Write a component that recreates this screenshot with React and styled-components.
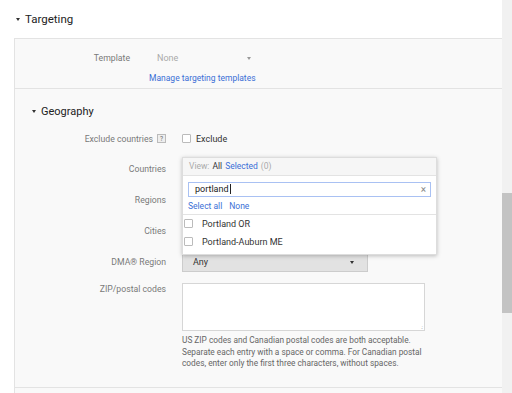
import React from "react"
import styled, { createGlobalStyle } from "styled-components"

const GlobalStyle = createGlobalStyle`
  * {
    margin: 0;
    padding: 0;
    box-sizing: border-box;
  }
  body {
    font-family: Roboto, "Liberation Sans", Arial, sans-serif;
    background: #fff;
    color: #333;
    overflow: hidden;
  }
`

const Page = styled.div`
  display: flex;
  width: 512px;
  height: 393px;
  overflow: hidden;
`

const Main = styled.div`
  flex: 1;
  padding-left: 14px;
  display: flex;
  flex-direction: column;
`

const Scrollbar = styled.div`
  width: 10px;
  background: #f1f1f1;
  display: flex;
  flex-direction: column;
  padding-top: 193px;
`

const Thumb = styled.div`
  height: 120px;
  background: #c3c3c3;
`

const Caret = styled.span`
  display: inline-block;
  width: 0;
  height: 0;
  border-left: 2.5px solid transparent;
  border-right: 2.5px solid transparent;
  border-top: 3px solid ${p => p.color || "#333"};
  margin-right: ${p => p.gap || 5}px;
`

const Heading = styled.h2`
  height: 38px;
  display: flex;
  align-items: center;
  padding-left: 2px;
  font-size: 11.5px;
  font-weight: 400;
  color: #222;
`

const Panel = styled.div`
  flex: 1;
  background: #f9f9f9;
  border-left: 1px solid #e3e3e3;
  border-top: 1px solid #e3e3e3;
  display: flex;
  flex-direction: column;
`

const TemplateSection = styled.div`
  height: 50px;
  border-bottom: 1px solid #e3e3e3;
  padding-top: 14px;
  display: flex;
`

const Label = styled.div`
  width: ${p => p.w}px;
  flex-shrink: 0;
  text-align: right;
  font-size: 8.7px;
  color: #7a7a7a;
  display: flex;
  justify-content: flex-end;
  align-items: center;
  gap: 4px;
`

const TemplateControl = styled.div`
  margin-left: 19px;
  display: flex;
  flex-direction: column;
  gap: 10px;
`

const PlainSelect = styled.div`
  width: 107px;
  padding-left: 8px;
  display: flex;
  justify-content: space-between;
  align-items: center;
  font-size: 9px;
  color: #aaa;
`

const Link = styled.span`
  font-size: 8.5px;
  color: #3b6fd6;
  cursor: pointer;
`

const GeoSection = styled.div`
  flex: 1;
  border-bottom: 1px solid #e3e3e3;
  display: flex;
  flex-direction: column;
`

const SubHeading = styled.h3`
  height: 25px;
  display: flex;
  align-items: center;
  padding-left: 17px;
  font-size: 11px;
  font-weight: 400;
  color: #222;
  margin-top: 10px;
`

const Row = styled.div`
  display: flex;
  align-items: ${p => (p.top ? "flex-start" : "center")};
  height: ${p => p.h || 31}px;
`

const Control = styled.div`
  margin-left: 16px;
  position: relative;
  display: flex;
  flex-direction: column;
  align-items: flex-start;
`

const Help = styled.span`
  display: inline-flex;
  align-items: center;
  justify-content: center;
  width: 9px;
  height: 9px;
  border: 1px solid #bbb;
  background: #eee;
  font-size: 6.5px;
  color: #666;
`

const CheckLabel = styled.label`
  display: flex;
  align-items: center;
  gap: 5px;
  font-size: 9px;
  color: #333;
`

const Box = styled.span`
  width: 9px;
  height: 9px;
  border: 1px solid #bbb;
  background: #fff;
  border-radius: 1px;
`

const Popup = styled.div`
  position: absolute;
  left: 0;
  top: -12px;
  width: 255px;
  background: #fff;
  border: 1px solid #ddd;
  box-shadow: 0 1px 4px rgba(0, 0, 0, 0.25);
  z-index: 2;
`

const PopupHead = styled.div`
  height: 18px;
  display: flex;
  align-items: center;
  gap: 3px;
  padding-left: 6px;
  font-size: 8.5px;
  color: #aaa;
  background: #f6f6f6;
  border-bottom: 1px solid #e3e3e3;
`

const Strong = styled.span`
  color: ${p => (p.blue ? "#3b6fd6" : "#333")};
`

const SearchArea = styled.div`
  padding: 6px 5px 3px 5px;
  border-bottom: 1px solid #e3e3e3;
`

const Search = styled.div`
  height: 15px;
  border: 1px solid #a9c1f3;
  display: flex;
  align-items: center;
  justify-content: space-between;
  padding: 0 4px 0 6px;
  font-size: 9px;
  color: #222;
`

const Cursor = styled.span`
  border-left: 1px solid #222;
  height: 9px;
  margin-left: 1px;
`

const Clear = styled.span`
  font-size: 10px;
  color: #888;
`

const Links = styled.div`
  display: flex;
  gap: 7px;
  margin-top: 4px;
  font-size: 8.5px;
  color: #3b6fd6;
`

const Options = styled.div`
  padding: 0 0 3px;
`

const Option = styled.div`
  height: 18px;
  display: flex;
  align-items: center;
  gap: 9px;
  padding-left: 1px;
  font-size: 9px;
  color: #333;
`

const GraySelect = styled.div`
  width: 186px;
  height: 20px;
  background: #e2e2e2;
  border: 1px solid #ccc;
  display: flex;
  align-items: center;
  justify-content: space-between;
  padding: 0 8px 0 10px;
  font-size: 9px;
  color: #333;
`

const TextArea = styled.div`
  width: 243px;
  height: 48px;
  background: #fff;
  border: 1px solid #d6d6d6;
  position: relative;
`

const Grip = styled.span`
  position: absolute;
  right: 2px;
  bottom: 0px;
  font-size: 6px;
  color: #999;
  letter-spacing: -1px;
`

const Hint = styled.p`
  width: 250px;
  margin-top: 4px;
  font-size: 8.3px;
  line-height: 11.6px;
  color: #666;
`

export default function App() {
  return (
    <Page>
      <GlobalStyle />
      <Main>
        <Heading>
          <Caret />
          Targeting
        </Heading>
        <Panel>
          <TemplateSection>
            <Label w={115} style={{ alignItems: "flex-start" }}>Template</Label>
            <TemplateControl>
              <PlainSelect>
                None
                <Caret color="#999" gap={0} />
              </PlainSelect>
              <Link>Manage targeting templates</Link>
            </TemplateControl>
          </TemplateSection>
          <GeoSection>
            <SubHeading>
              <Caret />
              Geography
            </SubHeading>
            <Row h={29}>
              <Label w={151}>
                Exclude countries <Help>?</Help>
              </Label>
              <Control>
                <CheckLabel>
                  <Box />
                  Exclude
                </CheckLabel>
              </Control>
            </Row>
            <Row>
              <Label w={151}>Countries</Label>
              <Control>
                <Popup>
                  <PopupHead>
                    View: <Strong>All</Strong> <Strong blue>Selected</Strong> (0)
                  </PopupHead>
                  <SearchArea>
                    <Search>
                      <span>
                        portland<Cursor />
                      </span>
                      <Clear>×</Clear>
                    </Search>
                    <Links>
                      <span>Select all</span>
                      <span>None</span>
                    </Links>
                  </SearchArea>
                  <Options>
                    <Option>
                      <Box />
                      Portland OR
                    </Option>
                    <Option>
                      <Box />
                      Portland-Auburn ME
                    </Option>
                  </Options>
                </Popup>
              </Control>
            </Row>
            <Row>
              <Label w={151}>Regions</Label>
            </Row>
            <Row>
              <Label w={151}>Cities</Label>
            </Row>
            <Row h={32}>
              <Label w={151}>DMA® Region</Label>
              <Control>
                <GraySelect>
                  Any
                  <Caret gap={0} />
                </GraySelect>
              </Control>
            </Row>
            <Row top h={90} style={{ paddingTop: 5 }}>
              <Label w={151} style={{ paddingTop: 1 }}>ZIP/postal codes</Label>
              <Control>
                <TextArea>
                  <Grip>.:</Grip>
                </TextArea>
                <Hint>
                  US ZIP codes and Canadian postal codes are both acceptable.
                  Separate each entry with a space or comma. For Canadian postal
                  codes, enter only the first three characters, without spaces.
                </Hint>
              </Control>
            </Row>
          </GeoSection>
          <div style={{ height: 5 }} />
        </Panel>
      </Main>
      <Scrollbar>
        <Thumb />
      </Scrollbar>
    </Page>
  )
}
